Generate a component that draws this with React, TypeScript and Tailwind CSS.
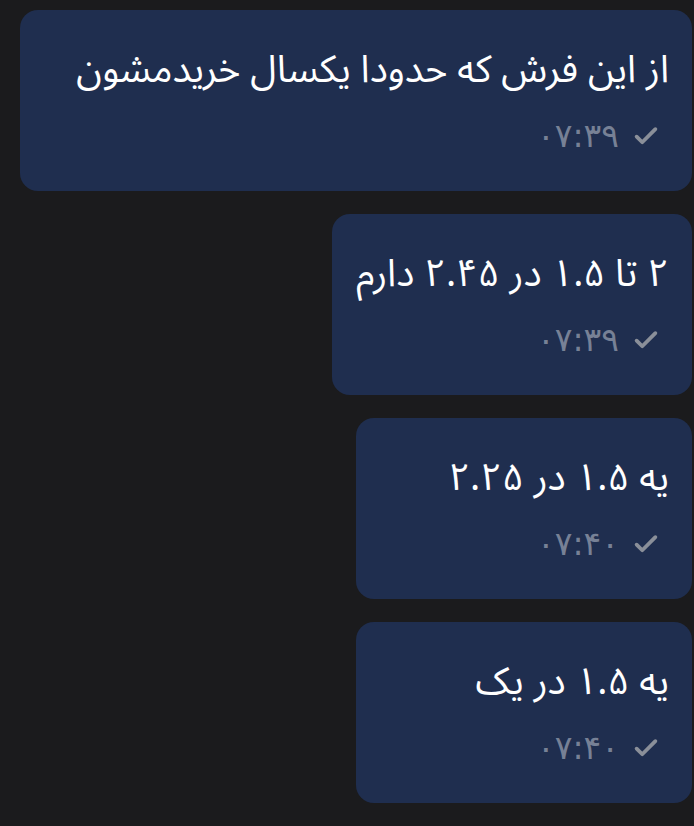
import React from 'react';

type Msg = { text: string; time: string; width: string };

const messages: Msg[] = [
  { text: 'از این فرش که حدودا یکسال خریدمشون', time: '۰۷:۳۹', width: 'w-[672px]' },
  { text: '۲ تا ۱.۵ در ۲.۴۵ دارم', time: '۰۷:۳۹', width: 'w-[360px]' },
  { text: 'یه ۱.۵ در ۲.۲۵', time: '۰۷:۴۰', width: 'w-[336px]' },
  { text: 'یه ۱.۵ در یک', time: '۰۷:۴۰', width: 'w-[336px]' },
];

function Check() {
  return (
    <svg width="30" height="30" viewBox="0 0 24 24" className="text-[#8a8f99]">
      <path d="M4.5 12.5l4.5 4.5L19.5 6.5" fill="none" stroke="currentColor" strokeWidth="3" strokeLinecap="round" strokeLinejoin="round" />
    </svg>
  );
}

function Bubble({ msg }: { msg: Msg }) {
  return (
    <div className={`${msg.width} h-[181px] rounded-[18px] bg-[#1f2e4f] pt-[32px] pr-[23px] pl-[23px]`}>
      <p className="text-[38px] leading-[56px] text-white whitespace-nowrap">{msg.text}</p>
      <div className="mt-[18px] flex items-center gap-[12px] h-[40px] pr-[8px]">
        <Check />
        <span
          className="text-[33px] leading-[40px] text-[#778196]"
          style={{ fontFamily: '"DejaVu Sans", sans-serif' }}
        >
          {msg.time}
        </span>
      </div>
    </div>
  );
}

export default function App() {
  return (
    <div
      dir="rtl"
      className="min-h-[826px] w-[694px] bg-[#1b1b1d] pt-[10px] pr-[2px] flex flex-col items-start gap-[23px]"
      style={{ fontFamily: '"Noto Sans Arabic", "DejaVu Sans", sans-serif' }}
    >
      {messages.map((m, i) => (
        <Bubble key={i} msg={m} />
      ))}
    </div>
  );
}
